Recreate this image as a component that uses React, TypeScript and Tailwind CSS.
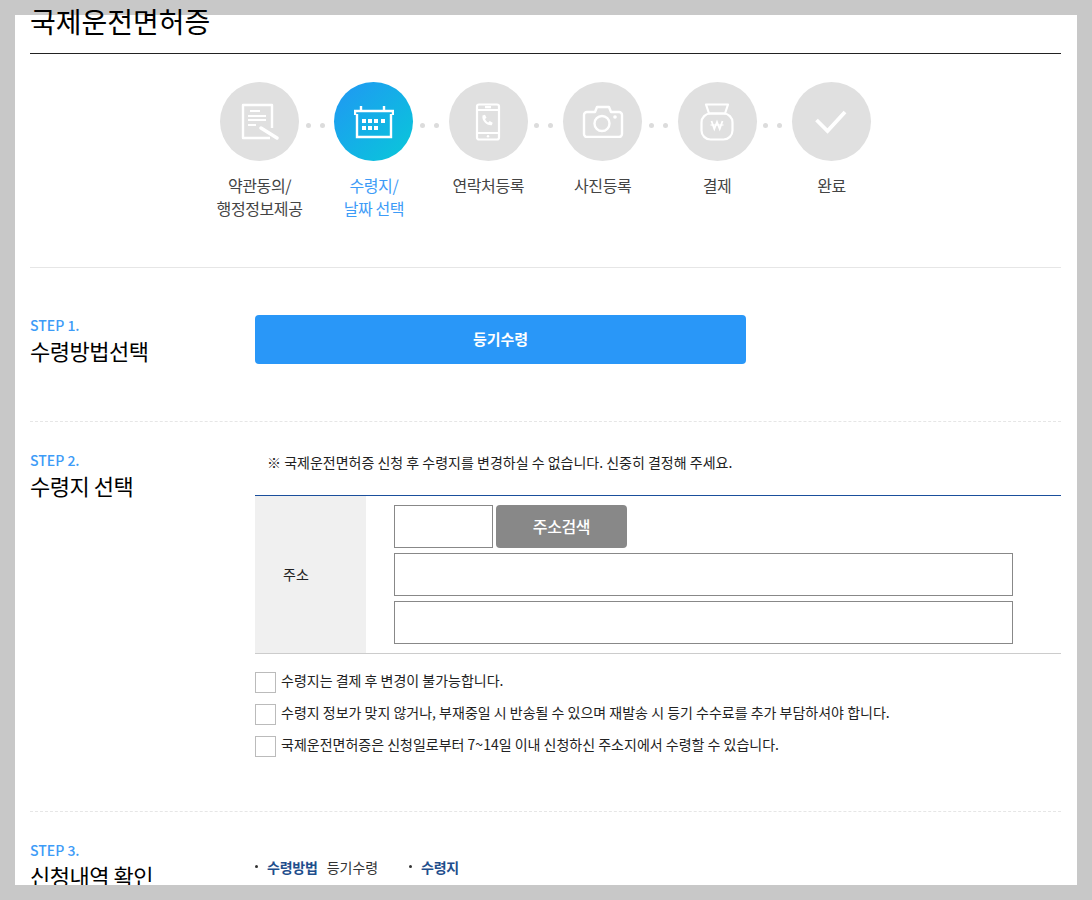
import { ReactNode } from "react";

const font = '"Noto Sans CJK KR", "Noto Sans", sans-serif';

function DocIcon() {
  return (
    <svg width="38" height="38" viewBox="0 0 38 38" fill="none" stroke="#fff" strokeWidth="2.4">
      <path d="M31 25V2H2v33h27" strokeLinejoin="round" />
      <path d="M9 8h10M7 13h18M7 17h18M7 22h8" strokeWidth="2" />
      <path d="M20 25l16 10" strokeWidth="3.4" strokeLinecap="round" />
    </svg>
  );
}

function CalendarIcon() {
  return (
    <svg width="40" height="34" viewBox="0 0 40 34" fill="none" stroke="#fff" strokeWidth="2.4">
      <path d="M3 9v23h34V9" />
      <path d="M1 10V6h38v4" />
      <path d="M7 1v5M30 1v5" />
      <g fill="#fff" stroke="none">
        <rect x="8" y="14" width="4" height="4" />
        <rect x="14" y="14" width="4" height="4" />
        <rect x="20" y="14" width="4" height="4" />
        <rect x="27" y="14" width="4" height="4" />
        <rect x="8" y="21" width="4" height="4" />
        <rect x="14" y="21" width="4" height="4" />
        <rect x="20" y="21" width="4" height="4" />
      </g>
    </svg>
  );
}

function PhoneIcon() {
  return (
    <svg width="26" height="38" viewBox="0 0 26 38" fill="none" stroke="#fff" strokeWidth="2.2">
      <rect x="2" y="1.500" width="22" height="35" rx="2" />
      <path d="M2 7h22M2 30h22M10 4.200h6" />
      <circle cx="13" cy="33.300" r="1.200" fill="#fff" stroke="none" />
      <path
        d="M7.500 12.500l2.500-.8 1.500 3-1.500 1.300c.6 1.600 1.700 2.800 3.300 3.500l1.400-1.400 3 1.700-.9 2.400c-5 .6-10.300-4.200-9.300-9.700z"
        fill="#fff"
        stroke="none"
      />
    </svg>
  );
}

function CameraIcon() {
  return (
    <svg width="42" height="33" viewBox="0 0 42 33" fill="none" stroke="#fff" strokeWidth="2.4">
      <path d="M5 7h8l2-5h12l2 5h8a3 3 0 0 1 3 3v19a3 3 0 0 1-3 3H5a3 3 0 0 1-3-3V10a3 3 0 0 1 3-3z" strokeLinejoin="round" />
      <circle cx="20" cy="18.500" r="7.500" />
      <circle cx="33" cy="12" r="1.800" fill="#fff" stroke="none" />
    </svg>
  );
}

function BagIcon() {
  return (
    <svg width="34" height="38" viewBox="0 0 34 38" fill="none" stroke="#fff" strokeWidth="2.2">
      <path d="M6 1.500h22l-3 9H9z" strokeLinejoin="round" />
      <rect x="1.500" y="10.500" width="31" height="26" rx="9" />
      <path d="M11.500 18l2.800 8 2.700-7 2.700 7 2.800-8" strokeWidth="1.800" />
      <path d="M10.500 22h13" strokeWidth="1.200" />
    </svg>
  );
}

function CheckIcon() {
  return (
    <svg width="32" height="24" viewBox="0 0 32 24" fill="none" stroke="#fff" strokeWidth="3.800">
      <path d="M1.500 10l11 11L30 2" />
    </svg>
  );
}

const steps: { icon: ReactNode; label: string[]; active?: boolean }[] = [
  { icon: <DocIcon />, label: ["약관동의/", "행정정보제공"] },
  { icon: <CalendarIcon />, label: ["수령지/", "날짜 선택"], active: true },
  { icon: <PhoneIcon />, label: ["연락처등록"] },
  { icon: <CameraIcon />, label: ["사진등록"] },
  { icon: <BagIcon />, label: ["결제"] },
  { icon: <CheckIcon />, label: ["완료"] },
];

const notices = [
  "수령지는 결제 후 변경이 불가능합니다.",
  "수령지 정보가 맞지 않거나, 부재중일 시 반송될 수 있으며 재발송 시 등기 수수료를 추가 부담하셔야 합니다.",
  "국제운전면허증은 신청일로부터 7~14일 이내 신청하신 주소지에서 수령할 수 있습니다.",
];

function StepTitle({ step, title }: { step: string; title: string }) {
  return (
    <div className="w-[225px] shrink-0">
      <p className="text-[14px] leading-[20px] font-medium text-[#3d9bf7]">{step}</p>
      <h3 className="text-[22px] leading-[30px] tracking-[-0.5px] text-black">{title}</h3>
    </div>
  );
}

export default function App() {
  return (
    <div className="h-[900px] bg-[#c8c8c8]" style={{ fontFamily: font }}>
      <div className="h-[885px] overflow-hidden pt-[15px] px-[15px]">
        <div className="flow-root h-full bg-white pl-[15px] pr-[16px]">
          <h2 className="-mt-[11px] h-[50px] border-b border-[#222] text-[28px] leading-[34px] text-black">
            국제운전면허증
          </h2>

          {/* 진행 단계 */}
          <div className="flex h-[214px] justify-center border-b border-[#e6e6e6] pt-[28px]">
            {steps.map((s, i) => (
              <div key={s.label[0]} className="flex">
                <div className="flex w-[79px] flex-col items-center">
                  <div
                    className={`flex h-[79px] w-[79px] items-center justify-center rounded-full ${
                      s.active ? "bg-gradient-to-br from-[#2196f3] to-[#0bc8d8]" : "bg-[#e0e0e0]"
                    }`}
                  >
                    {s.icon}
                  </div>
                  <div
                    className={`mt-[13px] whitespace-nowrap text-center text-[16px] leading-[23px] tracking-[-0.4px] ${
                      s.active ? "text-[#3d9bf7]" : "text-[#444]"
                    }`}
                  >
                    {s.label.map((l) => (
                      <div key={l}>{l}</div>
                    ))}
                  </div>
                </div>
                {i < steps.length - 1 && (
                  <div className="flex h-[86px] w-[35.400px] items-center justify-center gap-[9px] pr-[3px]">
                    <span className="h-[5px] w-[5px] rounded-full bg-[#dcdcdc]" />
                    <span className="h-[5px] w-[5px] rounded-full bg-[#dcdcdc]" />
                  </div>
                )}
              </div>
            ))}
          </div>

          {/* STEP 1 */}
          <div className="flex h-[154px] border-b border-dashed border-[#e6e6e6] pt-[47px]">
            <StepTitle step="STEP 1." title="수령방법선택" />
            <button className="h-[49px] w-[491px] rounded-[4px] bg-[#2997f8] text-[15px] font-bold text-white">
              등기수령
            </button>
          </div>

          {/* STEP 2 */}
          <div className="flex h-[390px] border-b border-dashed border-[#e6e6e6] pt-[28px]">
            <StepTitle step="STEP 2." title="수령지 선택" />
            <div className="flex-1">
              <p className="pb-[2px] pl-[12px] text-[14px] leading-[24px] text-[#222]">
                ※ 국제운전면허증 신청 후 수령지를 변경하실 수 없습니다. 신중히 결정해 주세요.
              </p>
              <div className="mt-[19px] flex h-[159px] border-y border-t-[#1a4f9c] border-b-[#ccc]">
                <div className="flex w-[111px] items-center bg-[#f0f0f0] pl-[28px] text-[14px] text-[#222]">
                  주소
                </div>
                <div className="flex flex-col gap-[5px] pl-[28px] pt-[9px]">
                  <div className="flex gap-[3px]">
                    <input className="h-[43px] w-[99px] border border-[#888]" />
                    <button className="h-[43px] w-[131px] rounded-[4px] bg-[#888] pb-[2px] text-[16px] font-medium tracking-[-0.4px] text-white">
                      주소검색
                    </button>
                  </div>
                  <input className="h-[43px] w-[619px] border border-[#888]" />
                  <input className="h-[43px] w-[619px] border border-[#888]" />
                </div>
              </div>
              <ul className="mt-[18px] flex flex-col gap-[11px]">
                {notices.map((n) => (
                  <li key={n} className="flex h-[21px] items-center gap-[5px]">
                    <span className="h-[21px] w-[21px] border border-[#bbb] bg-white" />
                    <span className="pb-[4px] text-[14px] text-[#222]">{n}</span>
                  </li>
                ))}
              </ul>
            </div>
          </div>

          {/* STEP 3 */}
          <div className="flex pt-[28px]">
            <StepTitle step="STEP 3." title="신청내역 확인" />
            <div className="flex pt-[3px] text-[14px] leading-[20px]">
              <span className="flex w-[154px] items-center">
                <span className="mr-[9px] h-[3px] w-[3px] rounded-full bg-[#333]" />
                <b className="mr-[9px] font-bold tracking-[-0.2px] text-[#1f4e8c]">수령방법</b>
                <span className="text-[#333]">등기수령</span>
              </span>
              <span className="flex items-center">
                <span className="mr-[9px] h-[3px] w-[3px] rounded-full bg-[#333]" />
                <b className="font-bold tracking-[-0.2px] text-[#1f4e8c]">수령지</b>
              </span>
            </div>
          </div>
        </div>
      </div>
    </div>
  );
}
